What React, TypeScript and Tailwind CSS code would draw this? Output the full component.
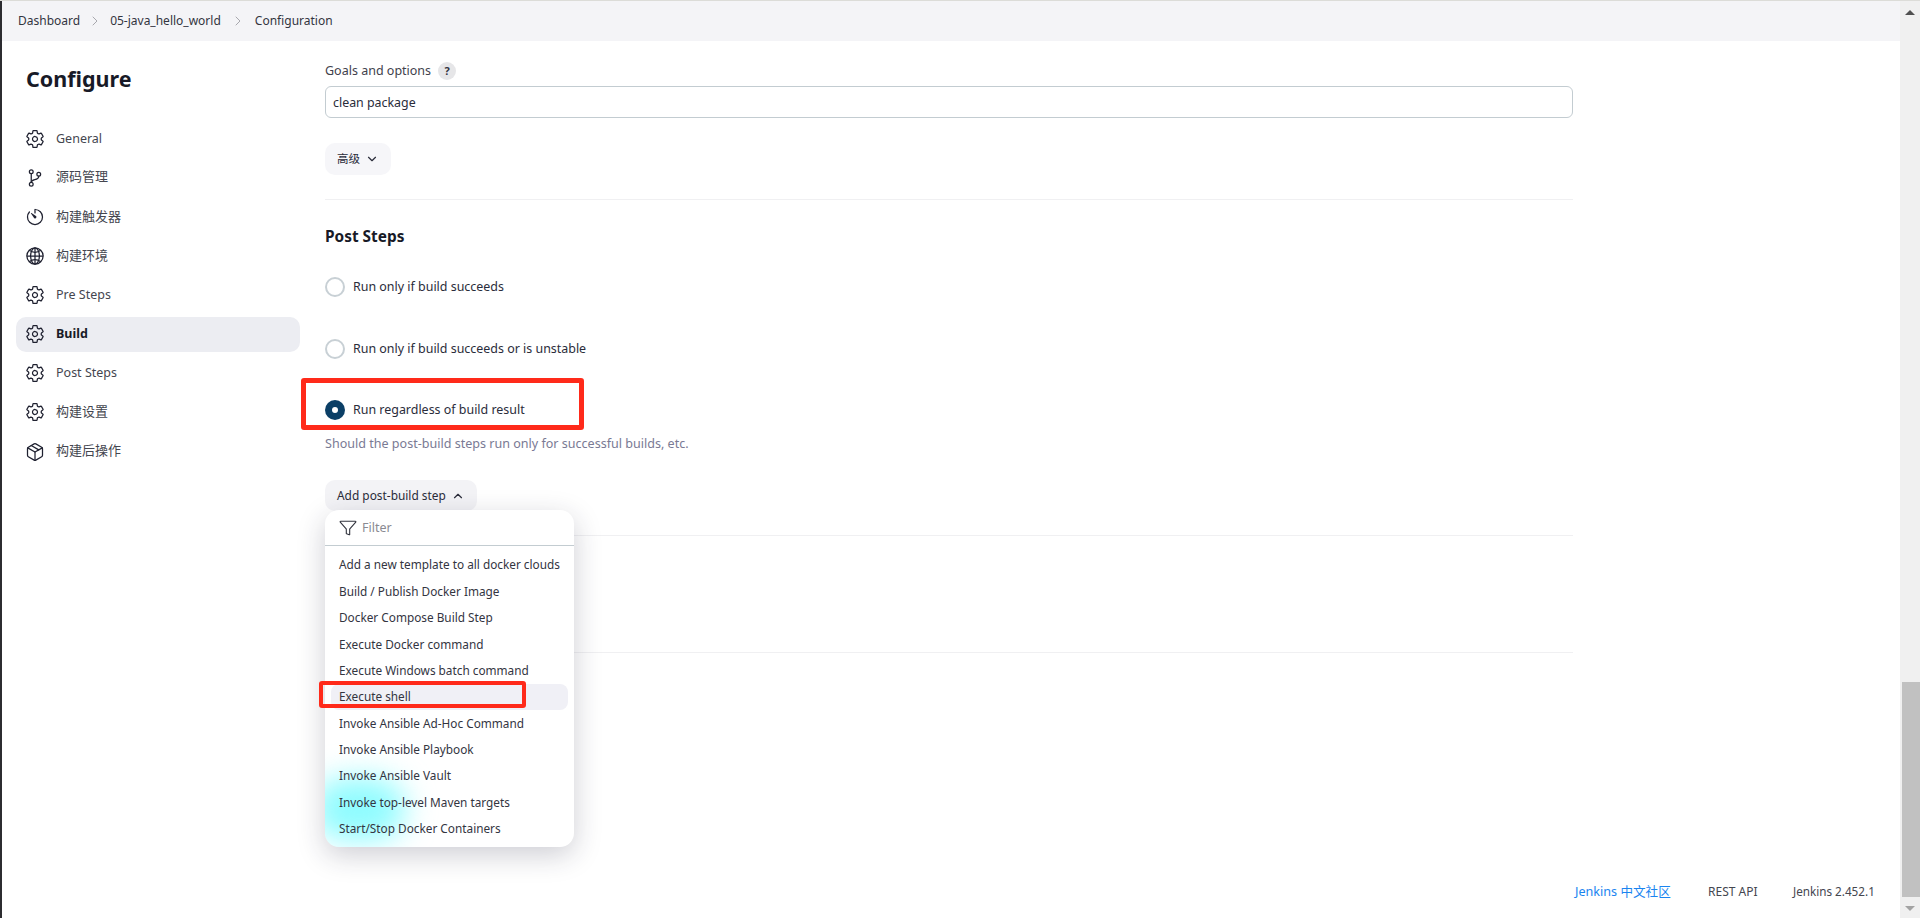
import { ChevronDown, ChevronRight, ChevronUp, Package } from "lucide-react";
import {
  IoFunnelOutline,
  IoGitBranchOutline,
  IoGlobeOutline,
  IoSettingsOutline,
  IoTimerOutline,
} from "react-icons/io5";

const sideItems = [
  { label: "General", icon: IoSettingsOutline },
  { label: "源码管理", icon: IoGitBranchOutline, cjk: true },
  { label: "构建触发器", icon: IoTimerOutline, cjk: true },
  { label: "构建环境", icon: IoGlobeOutline, cjk: true },
  { label: "Pre Steps", icon: IoSettingsOutline },
  { label: "Build", icon: IoSettingsOutline, active: true },
  { label: "Post Steps", icon: IoSettingsOutline },
  { label: "构建设置", icon: IoSettingsOutline, cjk: true },
  { label: "构建后操作", icon: Package, cjk: true },
];

const menuItems = [
  "Add a new template to all docker clouds",
  "Build / Publish Docker Image",
  "Docker Compose Build Step",
  "Execute Docker command",
  "Execute Windows batch command",
  "Execute shell",
  "Invoke Ansible Ad-Hoc Command",
  "Invoke Ansible Playbook",
  "Invoke Ansible Vault",
  "Invoke top-level Maven targets",
  "Start/Stop Docker Containers",
];

function Radio({ label, checked, className }: { label: string; checked?: boolean; className: string }) {
  return (
    <div className={`flex h-5 items-center gap-2 ${className}`}>
      {checked ? (
        <span className="flex size-5 items-center justify-center rounded-full bg-[#0b3f66]">
          <span className="size-[6px] rounded-full bg-white" />
        </span>
      ) : (
        <span className="size-5 rounded-full border-2 border-[#c8d0d5] bg-white" />
      )}
      <span className="text-[12.45px] text-[#2a2c3a]">{label}</span>
    </div>
  );
}

export default function App() {
  return (
    <div className="flex h-[918px] w-[1920px] overflow-hidden border-t border-[#dcdcd8] bg-white font-['Noto_Sans','Noto_Sans_CJK_SC',sans-serif] text-[#1f2130]">
      <div className="flex min-w-0 flex-1 flex-col border-l-2 border-[#2c2c30]">
        <nav className="flex h-10 shrink-0 items-center bg-[#f4f4f7] pl-4 text-[12px] text-[#33353f]">
          <span>Dashboard</span>
          <ChevronRight className="mx-[7px] size-4 text-[#a8a8ae]" strokeWidth={1.5} />
          <span>05-java_hello_world</span>
          <ChevronRight className="mx-[9px] size-4 text-[#a8a8ae]" strokeWidth={1.5} />
          <span>Configuration</span>
        </nav>

        <div className="flex min-h-0 flex-1">
          <aside className="w-[323px] shrink-0 pl-[14px]">
            <h1 className="ml-[10px] mt-5 text-[21.5px] font-bold leading-9 text-[#181a27]">Configure</h1>
            <ul className="mt-6 w-[284px]">
              {sideItems.map((item) => {
                const Icon = item.icon;
                return (
                  <li
                    key={item.label}
                    className={`mb-[4.15px] flex h-[35px] items-center gap-[11px] rounded-[10px] pl-[9px] ${
                      item.active ? "bg-[#ecedf2] font-bold text-[#181a27]" : "text-[#44464f]"
                    }`}
                  >
                    <Icon className="size-5 text-[#1f2130]" strokeWidth={1.5} />
                    <span className={item.cjk ? "pb-px text-[13px]" : "pt-px text-[12.5px]"}>{item.label}</span>
                  </li>
                );
              })}
            </ul>
          </aside>

          <main className="relative w-[1248px] shrink-0">
            <div className="mt-5 flex h-5 items-center gap-[7px] text-[12.5px] text-[#3f414c]">
              <span>Goals and options</span>
              <span className="flex size-[18px] items-center justify-center rounded-full bg-[#e6e6e8] text-[11px] font-bold text-[#33353f]">
                ?
              </span>
            </div>
            <div className="mt-[5px] flex h-8 items-center rounded-[6px] border border-[#c3ccd1] px-[7px] pt-[2px] text-[12.4px] text-[#2a2c3a]">
              clean package
            </div>
            <button className="mt-[25px] flex h-8 w-[66px] items-center gap-[5px] rounded-[10px] bg-[#f6f6f9] pl-3 text-[11.5px] text-[#2a2c3a]">
              高级
              <ChevronDown className="size-[14px]" strokeWidth={2} />
            </button>
            <div className="mt-6 h-px bg-[#f0f0f2]" />
            <h2 className="mt-[25px] text-[15.4px] font-bold leading-6 text-[#181a27]">Post Steps</h2>

            <Radio className="mt-7" label="Run only if build succeeds" />
            <Radio className="mt-[42px]" label="Run only if build succeeds or is unstable" />
            <Radio className="mt-[41px]" label="Run regardless of build result" checked />

            <p className="mt-[14px] text-[12.55px] leading-5 text-[#7a7a94]">
              Should the post-build steps run only for successful builds, etc.
            </p>
            <button className="mt-[26px] flex h-[31px] w-[152px] items-center gap-[5px] rounded-[10px] bg-[#f3f3f6] pl-3 text-[11.9px] text-[#2a2c3a]">
              Add post-build step
              <ChevronUp className="size-[14px]" strokeWidth={2} />
            </button>
            <div className="ml-[249px] mt-6 h-px bg-[#f0f0f2]" />
            <div className="ml-[249px] mt-[116px] h-px bg-[#f0f0f2]" />

            {/* dropdown that lies over the form */}
            <div className="absolute left-0 top-[469px] z-10 h-[337px] w-[249px] overflow-hidden rounded-[14px] bg-white text-[11.8px] text-[#33353f] shadow-[0_8px_28px_rgba(30,30,60,0.22)]">
              <div className="absolute left-[-12px] top-[268px] h-[62px] w-[92px] rounded-full bg-[#8ffcff] blur-[15px]" />
              <div className="relative flex h-9 items-center gap-[5px] border-b border-[#c3ccd1] pl-[14px] pt-px text-[12.5px] text-[#8a8a92]">
                <IoFunnelOutline className="size-[18px] text-[#33353f]" />
                Filter
              </div>
              <ul className="relative mt-[6px] px-[6px]">
                {menuItems.map((item) => (
                  <li
                    key={item}
                    className={`flex h-[26.4px] items-center rounded-[8px] pl-2 ${
                      item === "Execute shell" ? "bg-[#f0f0f6]" : ""
                    }`}
                  >
                    {item}
                  </li>
                ))}
              </ul>
            </div>

            {/* red annotation boxes drawn on the screenshot */}
            <div className="absolute left-[-24px] top-[337px] z-20 h-[52px] w-[283px] rounded-[3px] border-[5px] border-[#ff2a1a]" />
            <div className="absolute left-[-6px] top-[640px] z-20 h-[27px] w-[207px] rounded-[3px] border-[4px] border-[#ff2a1a]" />
          </main>
        </div>

        <footer className="flex h-[52px] shrink-0 items-center pl-[1573px] text-[12px] text-[#44464f]">
          <span className="w-[133px] text-[12.6px] text-[#1a84f0]">Jenkins 中文社区</span>
          <span className="w-[85px]">REST API</span>
          <span className="text-[11.7px]">Jenkins 2.452.1</span>
        </footer>
      </div>

      {/* browser scrollbar */}
      <div className="flex w-5 shrink-0 flex-col items-center bg-[#f0f0f0]">
        <div className="mt-[9px] size-0 border-x-[5px] border-b-[5px] border-x-transparent border-b-[#505050]" />
        <div className="mt-[667px] h-[215px] w-[18px] self-end bg-[#c1c1c1]" />
        <div className="mt-[9px] size-0 border-x-[5px] border-t-[5px] border-x-transparent border-t-[#a3a3a3]" />
      </div>
    </div>
  );
}
